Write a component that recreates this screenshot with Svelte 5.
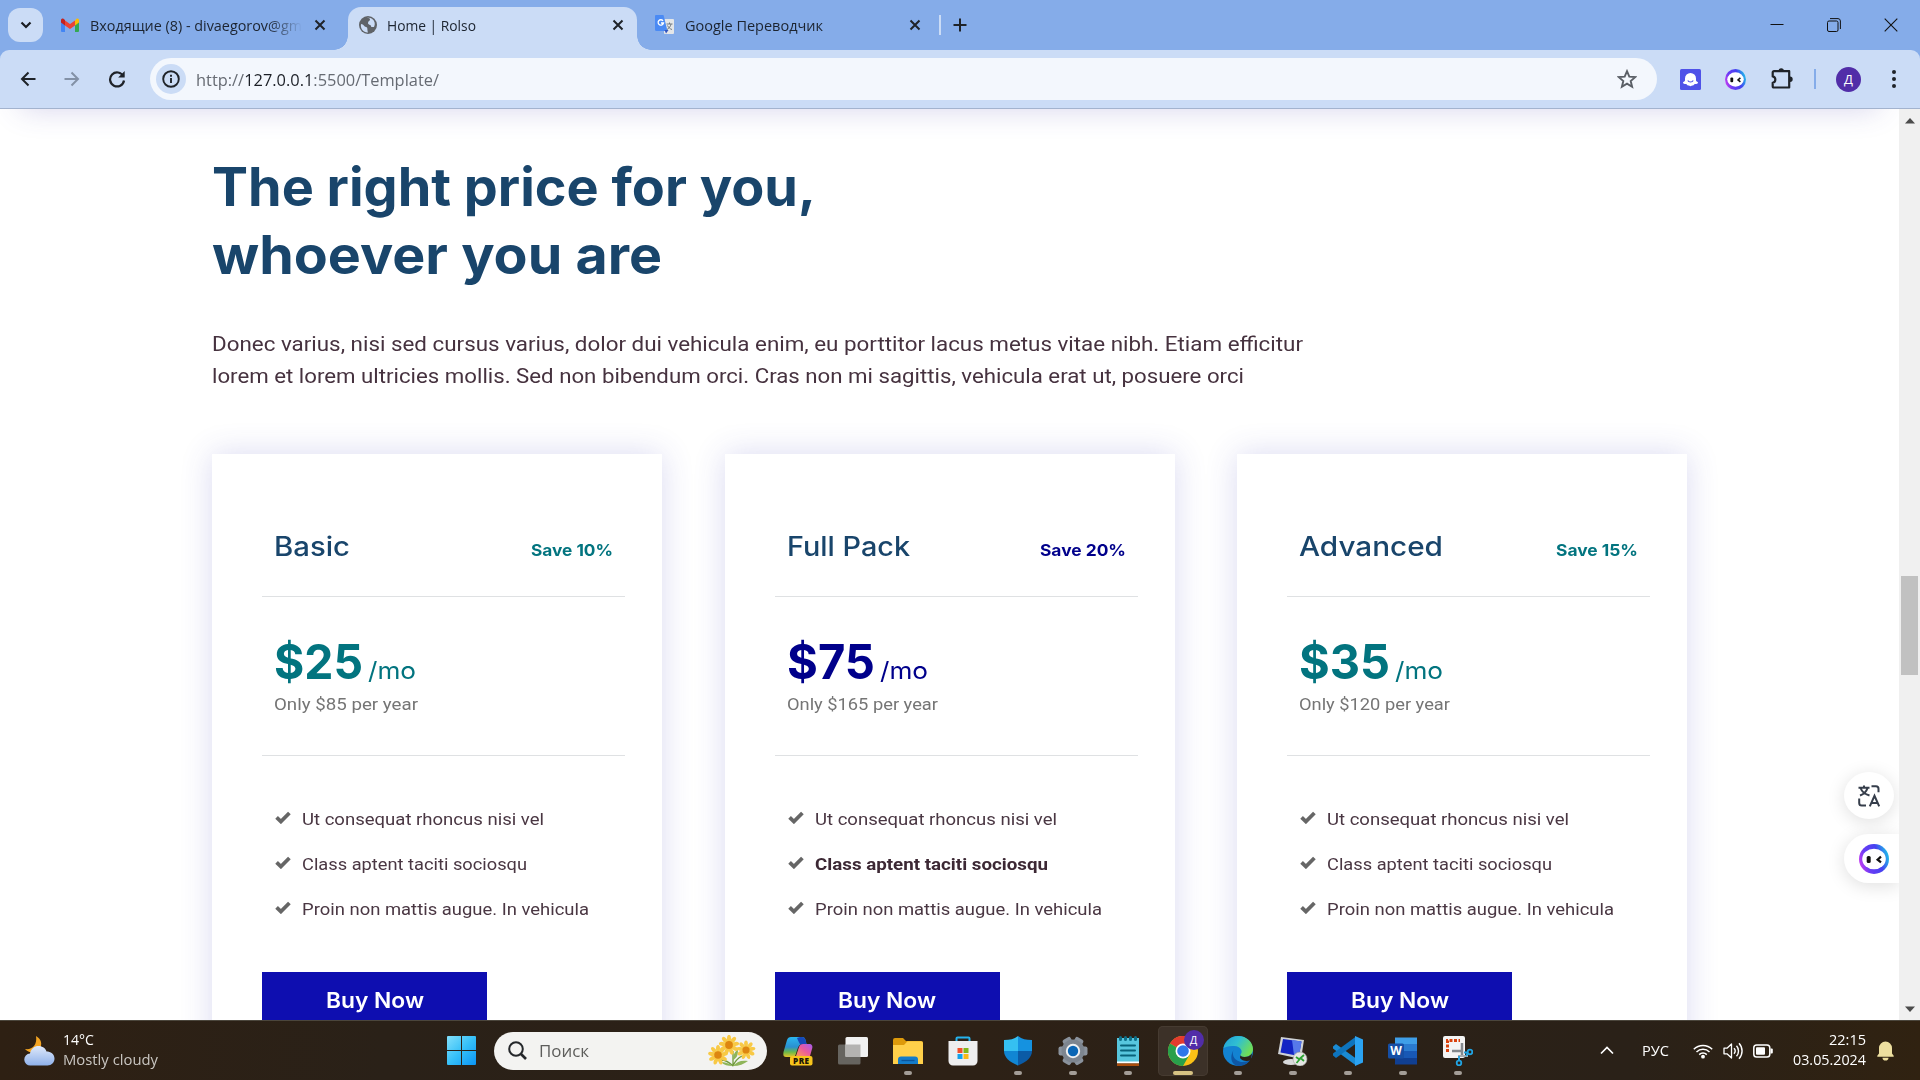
<script>
  // Stretches a label horizontally so that it fills the given width.
  function fit(node, width) {
    const natural = node.getBoundingClientRect().width;
    node.style.transform = `scaleX(${width / natural})`;
    node.style.marginRight = width - natural + 'px';
  }

  const plans = [
    { name: 'Basic', nameW: 76, save: 'Save 10%', saveW: 82, price: '$25', priceW: 89, moW: 48, note: 'Only $85 per year', noteW: 144, blue: false, strong: -1 },
    { name: 'Full Pack', nameW: 123, save: 'Save 20%', saveW: 86, price: '$75', priceW: 88, moW: 48, note: 'Only $165 per year', noteW: 151, blue: true, strong: 1 },
    { name: 'Advanced', nameW: 144, save: 'Save 15%', saveW: 82, price: '$35', priceW: 91, moW: 48, note: 'Only $120 per year', noteW: 151, blue: false, strong: -1 }
  ];
  const features = [
    { text: 'Ut consequat rhoncus nisi vel', w: 242, sw: 242 },
    { text: 'Class aptent taciti sociosqu', w: 225, sw: 233 },
    { text: 'Proin non mattis augue. In vehicula', w: 287, sw: 287 }
  ];
  const apps = ['copilot', 'taskview', 'explorer', 'store', 'shield', 'gear', 'notepad', 'chrome', 'edge', 'rdp', 'vscode', 'word', 'snip'];
  const idle = ['copilot', 'taskview', 'store'];
  const flowers = [[10, 20, 1], [21, 10, 1.02], [38, 15, 0.95]];
  const petals = [0, 40, 80, 120, 160, 200, 240, 280, 320];
  const teeth = [0, 60, 120, 180, 240, 300];
</script>

{#snippet closeX()}
  <svg class="x" width="12" height="12" viewBox="0 0 12 12"><path d="M1.5 1.5 10.5 10.5M10.5 1.5 1.5 10.5" stroke="#1f2329" stroke-width="2" fill="none" /></svg>
{/snippet}

{#snippet bot(size, id)}
  <svg width={size} height={size} viewBox="0 0 30 30">
    <defs>
      <linearGradient id={id} x1="0" y1="0.8" x2="1" y2="0.5">
        <stop offset="0" stop-color="#d83df0" /><stop offset=".3" stop-color="#6a3cf5" /><stop offset=".7" stop-color="#4542f0" /><stop offset="1" stop-color="#22b4ea" />
      </linearGradient>
    </defs>
    <circle cx="15" cy="15" r="15" fill="url(#{id})" />
    <ellipse cx="15" cy="15" rx="11.8" ry="10.3" fill="#fff" />
    <rect x="7.7" y="12" width="4" height="7" rx="1.6" fill="#111" />
    <path d="M22 12.6 18.6 15.6 22 18.4" stroke="#111" stroke-width="2.2" fill="none" />
  </svg>
{/snippet}

{#snippet appIcon(name)}
  <svg width="30" height="30" viewBox="0 0 30 30">
    {#if name === 'copilot'}
      <defs>
        <linearGradient id="cpA" x1="0" y1="0" x2="0" y2="1"><stop offset="0" stop-color="#2bb7ef" /><stop offset=".5" stop-color="#2a8fd0" /><stop offset=".75" stop-color="#69b84a" /><stop offset="1" stop-color="#e6c52a" /></linearGradient>
        <linearGradient id="cpB" x1="1" y1="0" x2="0" y2="1"><stop offset="0" stop-color="#a35cf0" /><stop offset=".5" stop-color="#ea5a9c" /><stop offset="1" stop-color="#ff9a55" /></linearGradient>
      </defs>
      <path d="M8 1h11c2 0 3 1 3.500 3l1 4h-4c-3 0-4 2-5 5l-2 6c-.6 1.500-1.500 2-3 2H3C0 21 0 18 .8 15L4 4c.7-2 2-3 4-3Z" fill="url(#cpA)" />
      <path d="M17 1h2c2 0 3 1 3.500 3l1 4h-4l-2 .5C16 7 15 4 14 2Z" fill="#1549ba" />
      <path d="M20 8h6c3 0 4 2 3 5l-2 7H13l3-9c.7-2 2-3 4-3Z" fill="url(#cpB)" />
      <rect x="7" y="20" width="22.500" height="9.500" rx="2" fill="#f8c51c" />
      <text x="18.300" y="27.600" text-anchor="middle" font-size="8.200" font-weight="800" letter-spacing=".4" fill="#1c1608">PRE</text>
    {:else if name === 'taskview'}
      <rect x="0" y="8.500" width="22.500" height="20" rx="1.500" fill="#66645f" />
      <rect x="7.500" y="1" width="22.500" height="20" rx="1.500" fill="#f1f1f1" />
      <path d="M7.500 8.500h15V21h-15Z" fill="#b4b3b1" />
    {:else if name === 'explorer'}
      <path d="M0 4a2 2 0 0 1 2-2h8l3 3h15a2 2 0 0 1 2 2v4H0Z" fill="#dd9a0b" />
      <path d="M0 9h11l3.500-3.700H28a2 2 0 0 1 2 2V28H0Z" fill="#ffd04a" />
      <path d="M5 28v-4.500a3 3 0 0 1 3-3h14a3 3 0 0 1 3 3V28Z" fill="#147cc9" />
      <path d="M8.500 24.500h13" stroke="#0a559c" stroke-width="1.300" />
    {:else if name === 'store'}
      <path d="M8.500 6V2.500a1 1 0 0 1 1-1h11a1 1 0 0 1 1 1V6" fill="none" stroke="#25b3ee" stroke-width="2" />
      <path d="M.5 5h29v20a4.500 4.500 0 0 1-4.500 4.500H5A4.500 4.500 0 0 1 .5 25Z" fill="#eeeeef" />
      <path d="M9.500 12h5v5h-5Z" fill="#f1502b" /><path d="M15.500 12h5v5h-5Z" fill="#80b71a" /><path d="M9.500 18h5v5h-5Z" fill="#12a2ec" /><path d="M15.500 18h5v5h-5Z" fill="#fbb816" />
    {:else if name === 'shield'}
      <path d="M15 0c4 3 8 4 14 4v11H15Z" fill="#1592e0" /><path d="M15 0C11 3 7 4 1 4v11h14Z" fill="#35c0f1" />
      <path d="M1 15h14v14.500C6 26 1 21 1 15Z" fill="#1186d3" /><path d="M29 15H15v14.500C24 26 29 21 29 15Z" fill="#0b5ba6" />
    {:else if name === 'gear'}
      {#each teeth as a (a)}<rect x="10.500" y="0.500" width="9" height="12" rx="2" fill="#8a929c" transform="rotate({a + 30} 15 15)" />{/each}
      <circle cx="15" cy="15" r="11.500" fill="#7d858f" /><circle cx="15" cy="15" r="7.200" fill="#eef0f2" /><circle cx="15" cy="15" r="5.200" fill="#0a66b5" />
    {:else if name === 'notepad'}
      <path d="M4 2h22v25H4Z" fill="#57c6dd" /><path d="M4 25.500h22v2H4Z" fill="#fff" /><path d="M4 27.500h22V30H4Z" fill="#a94e0d" />
      <path d="M8 9.500h14M8 14.500h14M8 19.500h14" stroke="#08627a" stroke-width="2" stroke-linecap="round" />
      <path d="M7.500 1.500v2M12.500 1.500v2M17.500 1.500v2M22.500 1.500v2" stroke="#0d6f88" stroke-width="3" stroke-linecap="round" />
    {:else if name === 'chrome'}
      <circle cx="15" cy="15" r="15" fill="#fbc116" />
      <path d="M15 15 2 7.500A15 15 0 0 1 28 7.500Z" fill="#e33b2e" />
      <path d="M2 7.500A15 15 0 0 0 15 30l6.500-11.300L15 15Z" fill="#29a04b" />
      <circle cx="15" cy="15" r="7.500" fill="#fff" /><circle cx="15" cy="15" r="5.800" fill="#2f77ea" />
    {:else if name === 'edge'}
      <defs><linearGradient id="edA" x1="0" y1="0" x2="1" y2=".5"><stop offset="0" stop-color="#229fd5" /><stop offset=".5" stop-color="#30bfd2" /><stop offset="1" stop-color="#6fde57" /></linearGradient></defs>
      <circle cx="15" cy="15" r="15" fill="#1383d2" />
      <path d="M.5 12C2 5 8 0 15 0c9 0 15 6.500 15 13 0 5-4 8-8.500 8-3 0-4.500-1-4-2.500 3-3 0-8.500-6-8.500C6 9.500 2 11 .5 12Z" fill="url(#edA)" />
      <path d="M10.500 14C8 20 13 26 20 26c3 0 6-1 8-3-3 5-8 7.500-13 7-6-.6-9-8-4.500-16Z" fill="#0e57a5" />
      <path d="M17.500 18.500c-.5 1.500 1 2.500 4 2.500 3 0 5.500-1 7.500-3.500L28 24c-4 2-9 1-11-2Z" fill="#2c2116" />
    {:else if name === 'rdp'}
      <path d="M3 1 26 4l-3 19L0 18Z" fill="#cfd2d6" /><path d="M5 3 23.500 5.500 21 20 2.500 16.500Z" fill="#1324c4" /><path d="M14 4 23.500 5.500 21 20l-5-1Z" fill="#5678ea" />
      <ellipse cx="13" cy="26" rx="8" ry="3" fill="#d9dadb" />
      <circle cx="22" cy="23" r="7" fill="#e5e6e3" stroke="#9d9d98" stroke-width=".6" />
      <path d="m18 21 3.500 2.500L18.500 27M26 19l-3.500 3 3.500 3" stroke="#2da332" stroke-width="1.800" fill="none" />
    {:else if name === 'vscode'}
      <path d="M0 10.500 3 8 23 22.500V29.500L0 12.500Z" fill="#1a8bd4" /><path d="M0 19.500 3 22 23 7.500V.5L0 17.500Z" fill="#0e74bd" />
      <path d="M22 0 30 3.500v23L22 30Z" fill="#2ba3f2" />
    {:else if name === 'word'}
      <path d="M7 1.500h22V8H7Z" fill="#3f9fe8" /><path d="M7 8h22v7H7Z" fill="#2a7bd0" /><path d="M7 15h22v7H7Z" fill="#1858b5" /><path d="M7 22h22v6.500H7Z" fill="#103f92" />
      <rect x="0" y="7.500" width="16" height="15" rx="1.500" fill="#164fa5" />
      <text x="8" y="19.300" text-anchor="middle" font-size="12" font-weight="700" fill="#fff">W</text>
    {:else if name === 'snip'}
      <rect x="0" y="0" width="22" height="22" rx="2" fill="#f4f4f4" />
      <path d="M4.500 16V4.500H17" fill="none" stroke="#d9410c" stroke-width="3" stroke-dasharray="3 1.500" />
      <path d="M19 7v12M9 15h9" stroke="#84898e" stroke-width="2.500" />
      <path d="M16 24v-4h9" fill="none" stroke="#a7abaf" stroke-width="2" />
      <circle cx="16" cy="27" r="2.300" fill="none" stroke="#21a4e3" stroke-width="1.800" /><circle cx="27" cy="16" r="2.300" fill="none" stroke="#21a4e3" stroke-width="1.800" /><path d="M16 24v-4M21 16.500h4M23 20l2-3" stroke="#21a4e3" stroke-width="1.800" />
    {/if}
  </svg>
{/snippet}

<div class="screen">
  <header class="tabs">
    <div class="drop"><svg width="12" height="8" viewBox="0 0 12 8"><path d="m1.500 1.500 4.500 4.500 4.500-4.500" fill="none" stroke="#1a1d22" stroke-width="2.200" /></svg></div>
    <div class="tab first">
      <svg width="18" height="14" viewBox="0 0 18 14"><path d="M0 3v10a1 1 0 0 0 1 1h3V5Z" fill="#4285f4" /><path d="M18 3v10a1 1 0 0 1-1 1h-3V5Z" fill="#34a853" /><path d="M14 2.500 15.500.8C16.800-.2 18 .8 18 2v2.500L14 7.500Z" fill="#fbbc04" /><path d="M4 7.500v-5L9 6l5-3.500v5L9 11Z" fill="#ea4335" /><path d="M0 2C0 .8 1.200-.2 2.500.8L4 2v5.500L0 4.500Z" fill="#c5221f" /></svg>
      <span class="label faded"><span use:fit={212}>Входящие (8) - divaegorov@gm</span></span>
      {@render closeX()}
    </div>
    <div class="tab active">
      <svg width="18" height="18" viewBox="0 0 18 18"><circle cx="9" cy="9" r="9" fill="#5f6368" /><path d="M2 8c3 0 3 3 5 3s1 3 2 5.500C5 17 1 13 2 8ZM8 2c2 0 3 0 3 1.500S9 5 9 7s3 1.500 3 3 1.500 1 3 1c1.500-3 1-6-2-8.300C11.500 1.700 9.500 1.500 8 2Z" fill="#cbdcf6" /></svg>
      <span class="label"><span use:fit={89}>Home | Rolso</span></span>
      {@render closeX()}
    </div>
    <div class="tab last">
      <svg width="20" height="20" viewBox="0 0 20 20"><rect x="9" y="4" width="10" height="15" rx="1" fill="#e4e6e8" /><path d="M11.500 9h6M14.500 7.500V9M12 14.500c2-1 3.500-3 4-5.500M12.500 10.500c1 2 2.500 3.500 4.500 4" stroke="#727a80" fill="none" stroke-width="1" /><path d="M1 0h7.500l4 16H1.500A1.500 1.500 0 0 1 0 14.500V1A1 1 0 0 1 1 0Z" fill="#4a8af4" /><path d="M9.500 15h4L11 18.500Z" fill="#3054c0" /><path d="M8 5.800A2.700 2.700 0 1 0 8.500 8H6" fill="none" stroke="#fff" stroke-width="1.300" /></svg>
      <span class="label"><span use:fit={138}>Google Переводчик</span></span>
      {@render closeX()}
    </div>
    <i class="bar"></i>
    <svg class="plus" width="14" height="14" viewBox="0 0 14 14"><path d="M7 .5v13M.5 7h13" stroke="#1f2329" stroke-width="2" /></svg>
    <div class="win">
      <svg width="14" height="14" viewBox="0 0 14 14"><path d="M.5 6.500h13" stroke="#111" /></svg>
      <svg width="14" height="14" viewBox="0 0 14 14"><rect x=".5" y="3" width="10.500" height="10.500" rx="1.500" fill="none" stroke="#111" /><path d="M3 .6h8A2.500 2.500 0 0 1 13.400 3v8" fill="none" stroke="#111" /></svg>
      <svg width="14" height="14" viewBox="0 0 14 14"><path d="m.7.7 12.600 12.600M13.300.7.7 13.300" stroke="#111" stroke-width="1.100" /></svg>
    </div>
  </header>

  <div class="toolwrap">
    <div class="tools">
      <svg class="nav" width="16" height="16" viewBox="0 0 16 16"><path d="M15.500 8H2M8.500 1.500 2 8l6.500 6.500" fill="none" stroke="#1f2329" stroke-width="2" /></svg>
      <svg class="nav" width="16" height="16" viewBox="0 0 16 16"><path d="M.5 8H14M7.500 1.500 14 8l-6.500 6.500" fill="none" stroke="#8391a6" stroke-width="2" /></svg>
      <svg class="nav" width="18" height="18" viewBox="0 0 18 18"><path d="M15.300 6.200A7 7 0 1 0 16 10.500" fill="none" stroke="#1f2329" stroke-width="2.200" /><path d="M16.700 1v6.500h-6.500Z" fill="#1f2329" /></svg>
      <div class="omni">
        <div class="info"><svg width="18" height="18" viewBox="0 0 18 18"><circle cx="9" cy="9" r="7.800" fill="none" stroke="#1f2329" stroke-width="1.900" /><path d="M9 8v5M9 4.700v2" stroke="#1f2329" stroke-width="1.900" /></svg></div>
        <span class="url" use:fit={243}>http://<b>127.0.0.1</b>:5500/Template/</span>
        <svg class="star" width="20" height="20" viewBox="0 0 20 20"><path d="m10 2.200 2.300 5.400 5.900.5-4.500 3.900 1.400 5.700L10 14.600l-5.100 3.100L6.300 12 1.800 8.100l5.900-.5Z" fill="none" stroke="#5a5f66" stroke-width="1.900" /></svg>
      </div>
      <svg class="ghost" width="21" height="21" viewBox="0 0 21 21"><rect width="21" height="21" rx="1.500" fill="#4f52e8" /><path d="M5 9.500a5.500 5.500 0 0 1 11 0v2c.3 1.500 2 1 2 2s-1.500 1.500-3 1.500c-1 0-1 1.500-2.200 1.500s-1.300.7-2.300.7-1-.7-2.300-.7S7 15 6 15c-1.500 0-3-.5-3-1.500s1.700-.5 2-2Z" fill="#fff" /><path d="M7.800 11.500c1 2 4.400 2 5.400 0" fill="none" stroke="#4f52e8" stroke-width="1.200" /></svg>
      <div class="botx">{@render bot(21, 'botA')}</div>
      <svg class="puzzle" width="22" height="22" viewBox="0 0 22 22"><path d="M3 3.200h15.200v16.300H3c-1 0-1.300-.5-1.300-1.300v-3.400c3.500-.6 3.500-5.800 0-6.400V4.500c0-.8.5-1.300 1.300-1.300Z" fill="none" stroke="#1f2329" stroke-width="2.200" stroke-linejoin="round" /><path d="M7.500 3a2.700 2.700 0 0 1 5.400 0ZM19 8.600a2.700 2.700 0 0 1 0 5.400Z" fill="#1f2329" /></svg>
      <i class="tsep"></i>
      <div class="avatar">Д</div>
      <svg class="dots" width="6" height="20" viewBox="0 0 6 20"><circle cx="3" cy="3" r="2" fill="#1f2329" /><circle cx="3" cy="10" r="2" fill="#1f2329" /><circle cx="3" cy="17" r="2" fill="#1f2329" /></svg>
    </div>
  </div>

  <div class="view">
    <main class="page">
      <div class="glow"></div>
      <h2><span use:fit={604}>The right price for you,</span><br /><span use:fit={450}>whoever you are</span></h2>
      <p class="lead"><span use:fit={1091}>Donec varius, nisi sed cursus varius, dolor dui vehicula enim, eu porttitor lacus metus vitae nibh. Etiam efficitur</span><br /><span use:fit={1032}>lorem et lorem ultricies mollis. Sed non bibendum orci. Cras non mi sagittis, vehicula erat ut, posuere orci</span></p>
      <div class="cards">
        {#each plans as p (p.name)}
          <section class="card" class:blue={p.blue}>
            <div class="head"><h3 use:fit={p.nameW}>{p.name}</h3><strong class="save" use:fit={p.saveW}>{p.save}</strong></div>
            <div class="cost">
              <div class="price"><b use:fit={p.priceW}>{p.price}</b><span use:fit={p.moW}>/mo</span></div>
              <div class="note"><span use:fit={p.noteW}>{p.note}</span></div>
            </div>
            <ul>
              {#each features as f, i (f.text)}
                <li class:strong={i === p.strong}>
                  <svg width="16" height="13" viewBox="0 0 16 13"><path d="m1.600 6.300 4.300 4.200L14.400 2" fill="none" stroke="#666" stroke-width="3.800" /></svg>
                  <span use:fit={i === p.strong ? f.sw : f.w}>{f.text}</span>
                </li>
              {/each}
            </ul>
            <div class="buy"><span use:fit={98}>Buy Now</span></div>
          </section>
        {/each}
      </div>
      <div class="floats">
        <div class="round">
          <svg width="22" height="22" viewBox="0 0 22 22"><path d="M.5 2.800h11M6 .5v2M2 10.500c4-1.500 6.500-4 7.500-7.500M2.800 3.500c1 3 4 5.500 8.700 7M13.500 1.200H18a2.500 2.500 0 0 1 2.500 2.500v3.500M1.200 13.500V18a2.500 2.500 0 0 0 2.500 2.500H8M11.800 21.300l4.700-10.500 4.700 10.500M13.500 18h6" fill="none" stroke="#363e4b" stroke-width="2" /></svg>
        </div>
        <div class="pill">{@render bot(30, 'botB')}</div>
      </div>
    </main>
    <div class="scroll">
      <svg width="10" height="6" viewBox="0 0 10 6"><path d="M0 5.500 5 0l5 5.500Z" fill="#4b4b4b" /></svg>
      <i class="thumb"></i>
      <svg class="down" width="10" height="6" viewBox="0 0 10 6"><path d="M0 .5 5 6l5-5.500Z" fill="#4b4b4b" /></svg>
    </div>
  </div>

  <footer class="task">
    <svg class="weather" width="31" height="30" viewBox="0 0 31 30">
      <defs><linearGradient id="cl" x1="0" y1="0" x2="0" y2="1"><stop offset="0" stop-color="#dfe9fa" /><stop offset="1" stop-color="#8fb1ea" /></linearGradient></defs>
      <path d="M12 0c5 3 7 8 3.500 13-3 4.500-9 5.500-14.500 0 4 .5 7-.5 9-3s2.700-6 2-10Z" fill="#f4a523" />
      <path d="M6.500 29.500a6 6 0 0 1-.5-12C7 12.500 10.500 10 14.500 10c4 0 7 2.300 8 5.500 4 0 8 2.500 8 7 0 4-3 7-7 7Z" fill="url(#cl)" />
    </svg>
    <div class="wtext"><span use:fit={31}>14°C</span><span class="dim" use:fit={95}>Mostly cloudy</span></div>
    <div class="start">
      <svg width="29" height="29" viewBox="0 0 29 29"><defs><linearGradient id="wn" x1="0" y1="0" x2="1" y2="1"><stop offset="0" stop-color="#83e0fb" /><stop offset=".5" stop-color="#36c0f8" /><stop offset="1" stop-color="#0a94f5" /></linearGradient></defs><path d="M1 0h13v14H0V1a1 1 0 0 1 1-1ZM15 0h13a1 1 0 0 1 1 1v13H15ZM0 15h14v14H1a1 1 0 0 1-1-1ZM15 15h14v13a1 1 0 0 1-1 1H15Z" fill="url(#wn)" /></svg>
    </div>
    <div class="search">
      <svg width="19" height="19" viewBox="0 0 19 19"><circle cx="8" cy="8" r="6.800" fill="none" stroke="#24272a" stroke-width="2" /><path d="m13 13 5 5" stroke="#24272a" stroke-width="2.600" /></svg>
      <span use:fit={50}>Поиск</span>
      <svg class="bouquet" width="49" height="32" viewBox="0 0 49 32">
        <path d="M13 25c5 0 8 2 12 6M25 31V16M25 31c2-5 5-8 9-10" fill="none" stroke="#6f9a3c" stroke-width="1.300" />
        <path d="M25 25c0-5 2-9 5-10 0 5-1 8-5 10ZM25 31c4-5 9-6 15-5-4 3-9 5-15 5ZM24 31c-3-3-7-4-11-4 3 3 7 4 11 4Z" fill="#8fb559" />
        {#each flowers as [x, y, s] (x)}
          <g transform="translate({x} {y}) scale({s})">
            {#each petals as a (a)}<ellipse cx="0" cy="-6.300" rx="2" ry="3.700" fill="#f8c945" transform="rotate({a})" />{/each}
            <circle r="3.800" fill="#dd8610" />
          </g>
        {/each}
      </svg>
    </div>
    <div class="apps">
      {#each apps as a (a)}
        <div class="app" class:on={a === 'chrome'}>
          {@render appIcon(a)}
          {#if a === 'chrome'}<span class="badge">Д</span>{/if}
          {#if !idle.includes(a)}<i class="dot"></i>{/if}
        </div>
      {/each}
    </div>
    <div class="tray">
      <svg class="up" width="14" height="9" viewBox="0 0 14 9"><path d="m1 7.500 6-6 6 6" fill="none" stroke="#fff" stroke-width="1.700" /></svg>
      <span class="lang" use:fit={27}>РУС</span>
      <svg class="wifi" width="20" height="16" viewBox="0 0 20 16"><path d="M.8 6.200a13 13 0 0 1 18.400 0M3.500 9a9.200 9.200 0 0 1 13 0M6.200 11.600a5.400 5.400 0 0 1 7.600 0" fill="none" stroke="#fff" stroke-width="1.500" /><circle cx="10" cy="13.700" r="1.900" fill="#fff" /></svg>
      <svg class="vol" width="20" height="18" viewBox="0 0 20 18"><path d="M1 6.200h3L8.500 2v14L4 11.800H1Z" fill="none" stroke="#fff" stroke-width="1.300" stroke-linejoin="round" /><path d="M11 6.300a4 4 0 0 1 0 5.400M13.500 3.700a8 8 0 0 1 0 10.600M16 1.200a11.500 11.500 0 0 1 0 15.600" fill="none" stroke="#fff" stroke-width="1.400" /></svg>
      <svg width="20" height="14" viewBox="0 0 20 14"><rect x=".8" y="1" width="16" height="12" rx="2.800" fill="none" stroke="#fff" stroke-width="1.500" /><rect x="3" y="3.200" width="9" height="7.600" rx="1" fill="#fff" /><path d="M17.500 4.500h1.300q1 0 1 1v3q0 1-1 1h-1.300Z" fill="#fff" /></svg>
      <div class="clock"><span use:fit={37}>22:15</span><span use:fit={73}>03.05.2024</span></div>
      <svg width="17" height="20" viewBox="0 0 17 20"><path d="M2 12.500V7a6.500 6.500 0 0 1 13 0v5.500l1.700 2.300q.5 1-.5 1H.8q-1 0-.5-1ZM5.500 16.800h6a3 2.800 0 0 1-6 0Z" fill="#eddf9f" /></svg>
    </div>
  </footer>
</div>

<style>
  :global(body) { margin: 0; overflow: hidden; }
  .screen { width: 1920px; height: 1080px; display: flex; flex-direction: column; overflow: hidden; background: #fff; font-family: 'Open Sans', 'Noto Sans', sans-serif; }
  .screen * { box-sizing: border-box; }
  .screen svg { display: block; flex: none; }
  .screen span, h3, .save, .price b { display: inline-block; white-space: nowrap; flex: none; transform-origin: 0 50%; }

  .tabs { height: 50px; background: #85ace9; display: flex; align-items: center; padding-left: 8px; flex: none; }
  .drop { width: 35px; height: 34px; border-radius: 12px; background: #cbdcf6; display: flex; align-items: center; justify-content: center; }
  .tab { display: flex; align-items: center; font-size: 14.500px; color: #1c2430; }
  .tab .x { margin-left: auto; }
  .first { width: 305px; padding: 0 22px 0 18px; gap: 11px; }
  .faded { -webkit-mask-image: linear-gradient(90deg, #000 84%, transparent); mask-image: linear-gradient(90deg, #000 84%, transparent); }
  .active { width: 289px; height: 43px; align-self: flex-end; background: #cbdcf6; border-radius: 13px 13px 0 0; padding: 0 13px 7px 11px; gap: 10px; position: relative; }
  .active::before, .active::after { content: ''; position: absolute; bottom: 0; width: 14px; height: 14px; }
  .active::before { left: -14px; background: radial-gradient(circle at 0 0, transparent 13.500px, #cbdcf6 14px); }
  .active::after { right: -14px; background: radial-gradient(circle at 100% 0, transparent 13.500px, #cbdcf6 14px); }
  .last { width: 302px; padding: 0 18px; gap: 10px; }
  .bar { width: 2px; height: 20px; background: #cbdcf6; }
  .plus { margin-left: 12px; }
  .win { margin-left: auto; display: flex; gap: 43px; padding-right: 22px; }

  .toolwrap { height: 59px; background: #85ace9; flex: none; }
  .tools { height: 59px; background: #cbdcf6; border-radius: 9px 9px 0 0; border-bottom: 1px solid #a3b3ce; display: flex; align-items: center; padding-left: 20px; }
  .nav { margin-right: 28px; }
  .nav:nth-child(3) { margin: 0 24px 0 0; }
  .omni { width: 1507px; height: 42px; background: #f3f7fd; border-radius: 21px; display: flex; align-items: center; padding-left: 6px; font-size: 17px; color: #666b73; flex: none; }
  .info { width: 30px; height: 30px; border-radius: 50%; background: #cbdcf6; display: flex; align-items: center; justify-content: center; margin-right: 10px; }
  .url b { font-weight: 400; color: #1b1f26; }
  .screen .star { margin-left: auto; margin-right: 20px; }
  .ghost { margin-left: 23px; }
  .botx { margin-left: 24px; }
  .puzzle { margin-left: 25px; }
  .tsep { width: 2px; height: 20px; background: #85ace9; margin-left: 21px; }
  .avatar { width: 25px; height: 25px; border-radius: 50%; background: #512da8; color: #fff; font-size: 13px; line-height: 24px; text-align: center; margin-left: 20px; }
  .dots { margin-left: 30px; }

  .view { height: 911px; display: flex; flex: none; }
  .page { width: 1899px; height: 911px; position: relative; overflow: hidden; padding: 44px 0 0 212px; }
  .glow { position: absolute; left: 20px; right: 20px; top: -40px; height: 40px; box-shadow: 0 0 30px rgba(70, 60, 170, 0.22); }
  h2 { margin: 0; font: 700 53px/68px Inter, sans-serif; color: #19456b; }
  .lead { margin: 39px 0 0; font: 400 20.500px/32px Roboto, sans-serif; color: #46323f; }
  .cards { margin-top: 62px; display: flex; gap: 62.500px; }
  .card { width: 450px; height: 620px; flex: none; background: #fff; box-shadow: 0 0 30px rgba(60, 60, 180, 0.19); padding: 73px 37px 0 50px; color: #02747f; }
  .blue { color: #00008b; }
  .head { height: 70px; border-bottom: 1px solid #dfe1e3; display: flex; justify-content: space-between; align-items: baseline; padding: 0 12px; }
  h3 { margin: 0; font: 500 27px/40px Inter, sans-serif; color: #19456b; }
  .save { font: 700 16.500px/24px Inter, sans-serif; }
  .cost { height: 159px; border-bottom: 1px solid #dfe1e3; padding: 35px 12px 0; }
  .price { height: 60px; display: flex; align-items: baseline; gap: 5px; font: 400 24px/60px Inter, sans-serif; }
  .price b { font-size: 48px; font-weight: 700; }
  .note { font: 400 17px/24px Roboto, sans-serif; color: #757575; }
  ul { margin: 41px 0 0; padding: 0 13px; list-style: none; }
  li { height: 45px; display: flex; align-items: center; gap: 11px; font: 400 16.500px/45px Roboto, sans-serif; color: #4a3743; }
  li svg { margin-top: -5px; }
  .strong { font-weight: 700; color: #3c2834; }
  .buy { width: 225px; height: 70px; margin-top: 40px; background: #0e0eb0; color: #fff; text-align: center; font: 600 22px/56px Inter, sans-serif; }
  .floats { position: absolute; right: 0; top: 663px; width: 55px; display: flex; flex-direction: column; gap: 15px; }
  .round { width: 50px; height: 47px; border-radius: 50%; background: #fff; box-shadow: 0 3px 18px rgba(0, 0, 0, 0.13); display: flex; align-items: center; justify-content: center; }
  .pill { width: 55px; height: 49px; border-radius: 25px 0 0 25px; background: #fff; box-shadow: 0 3px 18px rgba(0, 0, 0, 0.13); display: flex; align-items: center; padding-left: 15px; }
  .scroll { width: 21px; background: #f0f0f0; display: flex; flex-direction: column; align-items: center; padding: 9px 0 8px; }
  .thumb { width: 17px; height: 99px; background: #c1c1c1; margin-top: 452px; }
  .down { margin-top: auto; }

  .task { height: 60px; background: linear-gradient(90deg, #2e2013, #2a2118 20%, #2d2116 50%, #2a2118 85%, #302211); border-top: 1px solid #4b463c; display: flex; align-items: center; color: #fff; flex: none; }
  .weather { margin-left: 24px; }
  .wtext { width: 384px; margin: -2px 0 0 8px; display: flex; flex-direction: column; align-items: flex-start; font-size: 14.500px; line-height: 20px; }
  .dim { color: #c9c6c2; }
  .search { width: 273px; height: 38px; border-radius: 19px; background: #f3f3f1; color: #5d5d5b; margin-left: 18px; display: flex; align-items: center; padding: 0 10px 0 14px; font-size: 16px; flex: none; }
  .search span { margin-left: 12px; }
  .screen .bouquet { margin-left: auto; }
  .apps { display: flex; margin-left: 3px; }
  .app { width: 55px; height: 50px; display: flex; align-items: center; justify-content: center; position: relative; }
  .on { width: 50px; margin: 0 2.500px; background: #3c3128; border-radius: 5px; box-shadow: inset 0 0 0 1px #463b31; }
  .dot { position: absolute; bottom: 1px; left: 50%; width: 8px; height: 4px; margin-left: -4px; border-radius: 2px; background: #a39d97; }
  .on .dot { width: 20px; margin-left: -10px; background: #d6c283; }
  .badge { position: absolute; right: 4px; top: 4px; width: 20px; height: 20px; border-radius: 50%; background: #512da8; font-size: 11px; line-height: 19px; text-align: center; }
  .tray { margin-left: auto; display: flex; align-items: center; padding-right: 26px; font-size: 14px; }
  .lang { margin-left: 28px; }
  .up + .lang + .wifi { margin-left: 24px; }
  .vol { margin: 0 10px; }
  .clock { width: 93px; display: flex; flex-direction: column; align-items: flex-end; line-height: 20px; margin: -2px 11px 0 0; }
</style>
